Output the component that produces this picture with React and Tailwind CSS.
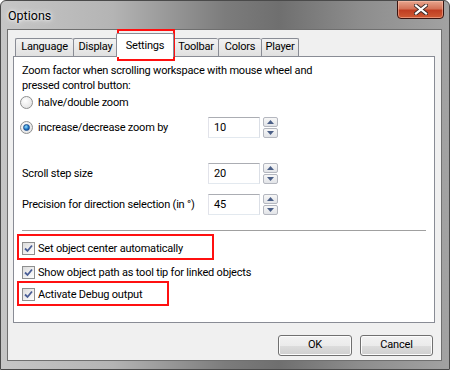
const font = { fontFamily: 'Roboto, "Liberation Sans", sans-serif' };

function Spinner() {
  return (
    <div className="flex flex-col gap-[1px] w-[15px] h-[21px]">
      {[0, 1].map((i) => (
        <div
          key={i}
          className="flex-1 border border-[#b4b7bf] rounded-[2px] bg-[linear-gradient(#f7f7f7,#e2e4e8)] flex items-center justify-center"
        >
          <svg width="7" height="4" viewBox="0 0 7 4">
            {i === 0 ? (
              <path d="M0 4 L3.5 0 L7 4 Z" fill="#4b5f87" />
            ) : (
              <path d="M0 0 L3.5 4 L7 0 Z" fill="#4b5f87" />
            )}
          </svg>
        </div>
      ))}
    </div>
  );
}

function NumInput({ value }) {
  return (
    <div className="flex items-center gap-[3px]">
      <div className="w-[52px] h-[21px] border border-[#abadb3] border-b-[#e3e9ef] border-l-[#e2e3ea] border-r-[#dbdfe6] bg-white flex items-center pl-[5px] text-black">
        {value}
      </div>
      <Spinner />
    </div>
  );
}

function Radio({ checked }) {
  return (
    <div className="w-[13px] h-[13px] rounded-full border border-[#8e8f8f] bg-[radial-gradient(circle_at_40%_35%,#ffffff,#dcdcdc)] flex items-center justify-center shrink-0">
      {checked && (
        <div className="w-[7px] h-[7px] rounded-full bg-[radial-gradient(circle_at_40%_35%,#8fe0ff,#1a6fc0_60%,#0d3f8a)] border border-[#1d4f8f]" />
      )}
    </div>
  );
}

function Check() {
  return (
    <div className="w-[13px] h-[13px] border border-[#8e8f8f] bg-[linear-gradient(135deg,#dcdcdc,#ffffff)] flex items-center justify-center shrink-0">
      <svg width="9" height="9" viewBox="0 0 9 9">
        <path d="M1 4.5 L3.5 7 L8 1.5" stroke="#4a5e96" strokeWidth="1.8" fill="none" />
      </svg>
    </div>
  );
}

function Tab({ label, w, selected }) {
  if (selected) {
    return (
      <div
        className="h-[24px] -mb-[1px] bg-white border border-[#898c95] border-b-0 rounded-t-[2px] flex items-start justify-center pt-[4px] text-black relative z-10 -mx-[1px]"
        style={{ width: w }}
      >
        {label}
      </div>
    );
  }
  return (
    <div
      className="h-[18px] bg-[linear-gradient(#f2f2f2,#e0e0e0)] border border-[#898c95] border-b-0 border-r-0 last:border-r rounded-t-[2px] flex items-center justify-center text-black"
      style={{ width: w }}
    >
      {label}
    </div>
  );
}

export default function App() {
  return (
    <div
      className="w-[450px] h-[370px] relative overflow-hidden rounded-t-[6px] border border-[#4a4a4a] bg-[linear-gradient(90deg,#c6c6c6_0%,#b4b4b4_25%,#7c7c7c_50%,#6f6f6f_62%,#8d8d8d_80%,#a2a2a2_100%)] flex flex-col text-[11px] tracking-[-0.2px]"
      style={font}
    >
      <div className="h-[28px] flex items-start justify-between shrink-0">
        <div className="pl-[7px] pt-[6px] text-[12.5px] tracking-normal text-black [text-shadow:0_0_6px_#ffffff,0_0_3px_#ffffff]">
          Options
        </div>
        <div className="mr-[5px] w-[47px] h-[19px] -mt-[1px] rounded-b-[4px] border border-[#3a1410] bg-[linear-gradient(#e8a58e_0%,#d47358_45%,#c03e22_55%,#cf5a34_100%)] flex items-center justify-center shadow-[inset_0_0_0_1px_rgba(255,200,180,0.5)]">
          <svg width="14" height="11" viewBox="0 0 14 11">
            <path d="M2 1.5 L12 9.5 M12 1.5 L2 9.5" stroke="#3a2a28" strokeWidth="4" strokeLinecap="square" />
            <path d="M2 1.5 L12 9.5 M12 1.5 L2 9.5" stroke="#ffffff" strokeWidth="2.2" strokeLinecap="square" />
          </svg>
        </div>
      </div>

      <div className="ml-[6px] w-[435px] h-[332px] border border-[#6f6f6f] bg-[#f0f0f0] flex flex-col pl-[5px] pr-[7px] pt-[3px] relative">
        <div className="flex items-end pl-[2px] h-[23px]">
          <Tab label="Language" w={58} />
          <Tab label="Display" w={44} />
          <Tab label="Settings" w={58} selected />
          <Tab label="Toolbar" w={45} />
          <Tab label="Colors" w={43} />
          <Tab label="Player" w={38} />
        </div>

        <div className="w-[422px] h-[267px] border border-[#898c95] bg-white flex flex-col pl-[8px] pt-[6px] text-black leading-[15px]">
          <div>Zoom factor when scrolling workspace with mouse wheel and</div>
          <div>pressed control button:</div>
          <div className="flex items-center gap-[5px] -ml-[2px] h-[16px] mt-[1px]">
            <Radio />
            <span>halve/double zoom</span>
          </div>
          <div className="flex items-center -ml-[2px] h-[21px] mt-[7px]">
            <div className="w-[188px] flex items-center gap-[5px]">
              <Radio checked />
              <span>increase/decrease zoom by</span>
            </div>
            <NumInput value="10" />
          </div>
          <div className="flex items-center h-[21px] mt-[25px]">
            <div className="w-[186px]">Scroll step size</div>
            <NumInput value="20" />
          </div>
          <div className="flex items-center h-[21px] mt-[10px]">
            <div className="w-[186px] whitespace-nowrap">Precision for direction selection (in °)</div>
            <NumInput value="45" />
          </div>
          <div className="mt-[15px] h-[1px] w-[404px] bg-[#a0a0a0]" />
          <div className="flex items-center gap-[3px] h-[16px] mt-[9px]">
            <Check />
            <span>Set object center automatically</span>
          </div>
          <div className="flex items-center gap-[3px] h-[16px] mt-[8px]">
            <Check />
            <span>Show object path as tool tip for linked objects</span>
          </div>
          <div className="flex items-center gap-[3px] h-[16px] mt-[6px]">
            <Check />
            <span>Activate Debug output</span>
          </div>
        </div>

        <div className="flex justify-end gap-[8px] mt-[12px] pr-[1px]">
          <button className="w-[74px] h-[21px] rounded-[3px] border border-[#707070] bg-[linear-gradient(#f2f2f2_0%,#ebebeb_50%,#dddddd_51%,#cfcfcf_100%)] text-black shadow-[inset_0_0_0_1px_#fcfcfc]">
            OK
          </button>
          <button className="w-[73px] h-[21px] rounded-[3px] border border-[#707070] bg-[linear-gradient(#f2f2f2_0%,#ebebeb_50%,#dddddd_51%,#cfcfcf_100%)] text-black shadow-[inset_0_0_0_1px_#fcfcfc]">
            Cancel
          </button>
        </div>

        <div className="absolute left-[109px] top-[-1px] w-[58px] h-[32px] border-2 border-[#ff1010] pointer-events-none" />
        <div className="absolute left-[9px] top-[204px] w-[197px] h-[26px] border-2 border-[#ff1010] pointer-events-none" />
        <div className="absolute left-[9px] top-[251px] w-[152px] h-[25px] border-2 border-[#ff1010] pointer-events-none" />
      </div>
    </div>
  );
}
